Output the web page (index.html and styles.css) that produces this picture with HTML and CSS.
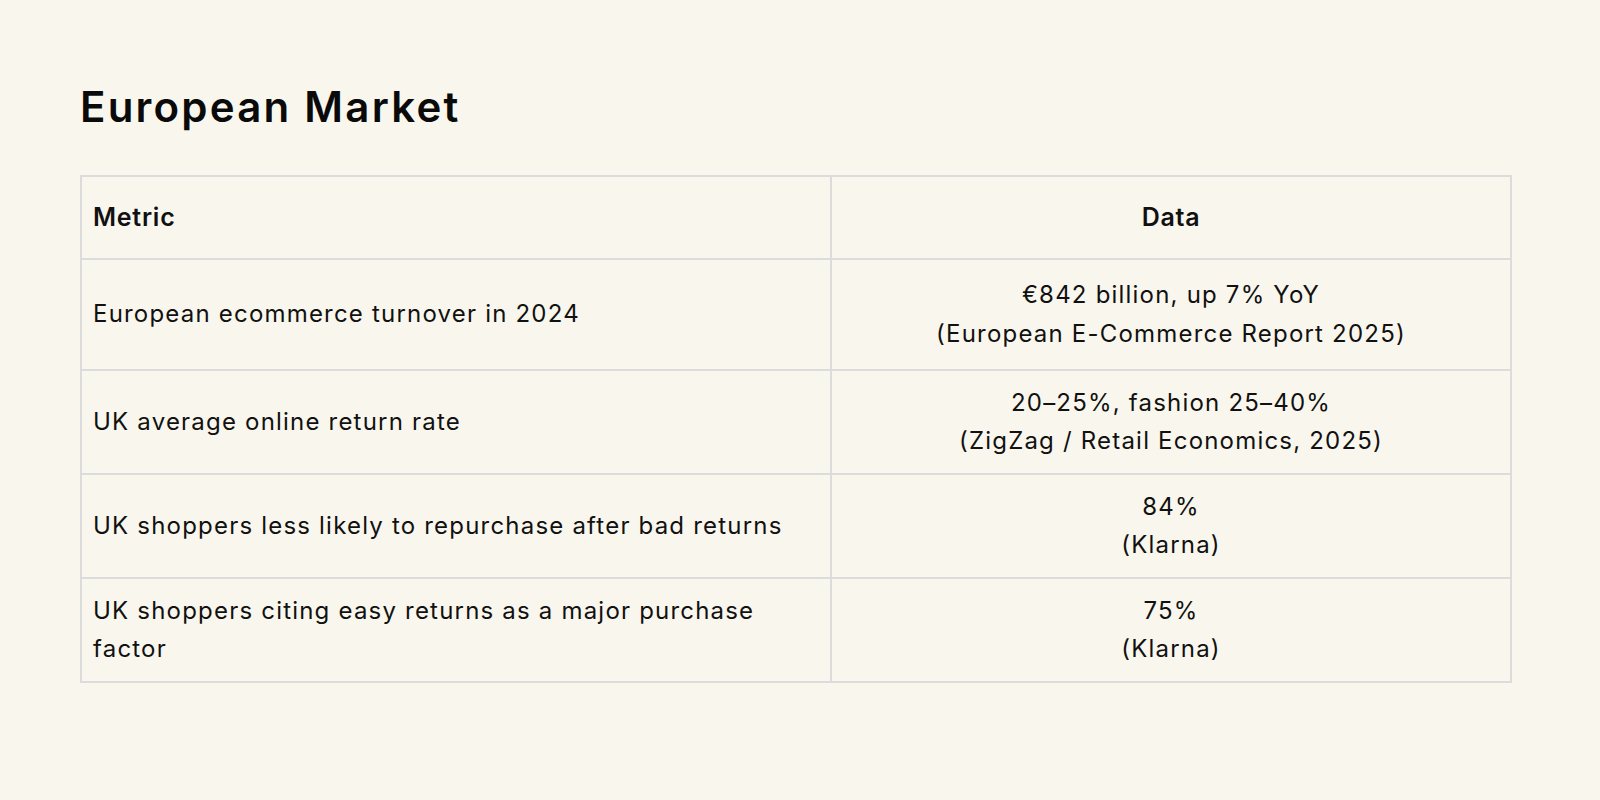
FILE: index.html
```html
<!DOCTYPE html>
<html lang="en">
<head>
<meta charset="utf-8">
<title>European Market</title>
<link rel="stylesheet" href="styles.css">
</head>
<body>
<main class="page">
  <h1 class="title">European Market</h1>
  <table class="market">
    <colgroup>
      <col class="col-metric">
      <col class="col-data">
    </colgroup>
    <thead>
      <tr>
        <th class="th-metric">Metric</th>
        <th class="th-data">Data</th>
      </tr>
    </thead>
    <tbody>
      <tr class="row-tall">
        <td class="metric">European ecommerce turnover in 2024</td>
        <td class="data">€842 billion, up 7% YoY<br>(European E-Commerce Report 2025)</td>
      </tr>
      <tr>
        <td class="metric">UK average online return rate</td>
        <td class="data">20–25%, fashion 25–40%<br>(ZigZag / Retail Economics, 2025)</td>
      </tr>
      <tr>
        <td class="metric">UK shoppers less likely to repurchase after bad returns</td>
        <td class="data">84%<br>(Klarna)</td>
      </tr>
      <tr>
        <td class="metric">UK shoppers citing easy returns as a major purchase factor</td>
        <td class="data">75%<br>(Klarna)</td>
      </tr>
    </tbody>
  </table>
</main>
</body>
</html>
```

FILE: styles.css
```css
html, body {
  margin: 0;
  padding: 0;
  background: #f9f7ed;
}

body {
  font-family: "Inter", "Liberation Sans", sans-serif;
  color: #111111;
}

.page {
  padding: 82px 88px 0 80px;
}

.title {
  margin: 0 0 43px 0;
  font-size: 42px;
  line-height: 50px;
  font-weight: 600;
  letter-spacing: 0.053em;
  color: #0a0a0a;
}

.market {
  width: 1432px;
  border-collapse: collapse;
  border: 2px solid #dcdcdc;
  table-layout: fixed;
}

.col-metric {
  width: 750px;
}

.market th,
.market td {
  border: 2px solid #dcdcdc;
  padding: 12.5px 11px;
  font-size: 24px;
  line-height: 38.5px;
  letter-spacing: 0.05em;
  vertical-align: middle;
}

.market th {
  padding: 20px 11px;
  font-size: 25px;
  line-height: 41px;
  font-weight: 600;
  letter-spacing: 0.03em;
}

.th-metric {
  text-align: left;
}

.th-data {
  text-align: center;
}

.metric {
  text-align: left;
}

.data {
  text-align: center;
}

.row-tall td {
  padding-top: 16px;
  padding-bottom: 16px;
}
```
